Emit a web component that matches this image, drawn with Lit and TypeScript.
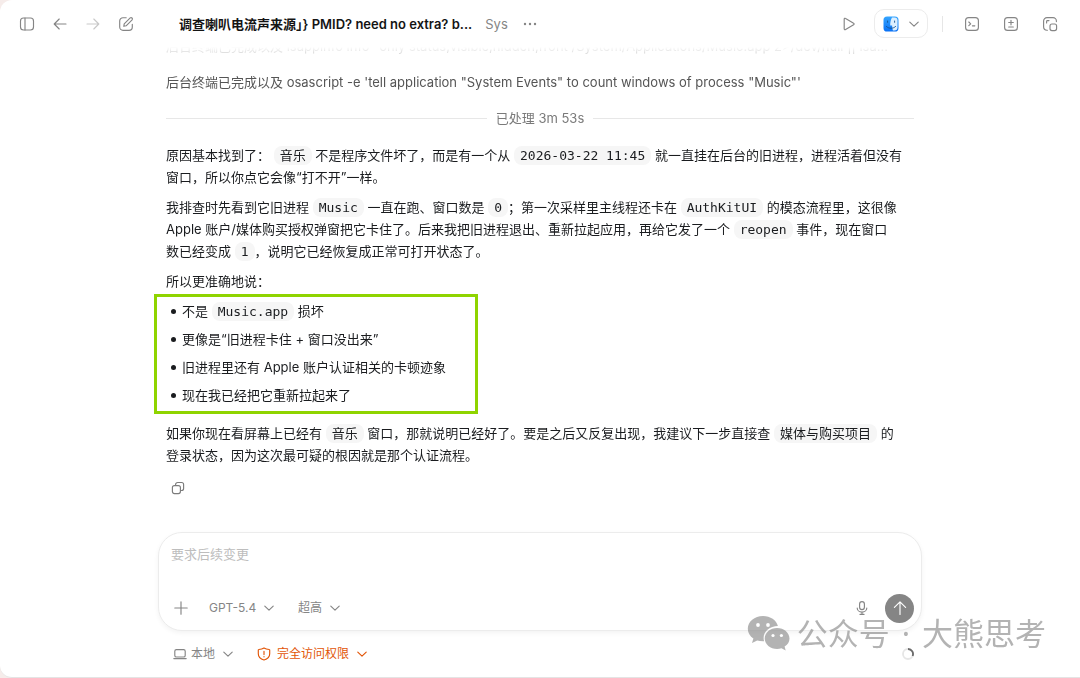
import { LitElement, html, css, svg } from "lit";
import { customElement, property } from "lit/decorators.js";

const icons: Record<string, { size: number; body: unknown }> = {
  sidebar: {
    size: 16,
    body: svg`<rect x="1.5" y="2" width="13" height="12" rx="3"/><path d="M6 2v12"/>`,
  },
  back: { size: 16, body: svg`<path d="M14 8H2.2M7.2 3 2.2 8l5 5"/>` },
  forward: { size: 16, body: svg`<path d="M2 8h11.8M8.8 3l5 5-5 5"/>` },
  compose: {
    size: 16,
    body: svg`<path d="M8.2 1.7H5a3.3 3.3 0 0 0-3.3 3.3v6A3.3 3.3 0 0 0 5 14.3h6a3.3 3.3 0 0 0 3.3-3.3V8.2"/><path d="M5.8 10.3l.4-2.4 6-6a1.35 1.35 0 0 1 1.9 1.9l-6 6z"/>`,
  },
  play: {
    size: 16,
    body: svg`<path d="M3.2 3.2v9.6a.9.9 0 0 0 1.4.8l8-4.8a.9.9 0 0 0 0-1.6l-8-4.8a.9.9 0 0 0-1.4.8z"/>`,
  },
  terminal: {
    size: 16,
    body: svg`<rect x="1.6" y="1.6" width="12.8" height="12.8" rx="3"/><path d="M4.8 6l1.9 1.8-1.9 1.8M8.4 9.8h2.4"/>`,
  },
  diff: {
    size: 16,
    body: svg`<rect x="1.6" y="1.6" width="12.8" height="12.8" rx="3"/><path d="M8 4.2v4.6M5.7 6.5h4.6M5.7 11h4.6"/>`,
  },
  popout: {
    size: 16,
    body: svg`<path d="M5.4 14.2H5a3.4 3.4 0 0 1-3.4-3.4V5A3.4 3.4 0 0 1 5 1.6h6A3.4 3.4 0 0 1 14.4 5v.6"/><path d="M4.6 7V5.4a.8.8 0 0 1 .8-.8H7"/><rect x="8" y="8" width="6.6" height="6.6" rx="2"/>`,
  },
  more: {
    size: 16,
    body: svg`<g fill="currentColor" stroke="none"><circle cx="3" cy="8" r="1.2"/><circle cx="8" cy="8" r="1.2"/><circle cx="13" cy="8" r="1.2"/></g>`,
  },
  chevron: { size: 10, body: svg`<path d="M.8 3.1 5 7.2l4.2-4.1"/>` },
  copy: {
    size: 14,
    body: svg`<rect x="1.4" y="4.6" width="8" height="8" rx="2"/><path d="M4.6 4.4v-.9a2 2 0 0 1 2-2h4a2 2 0 0 1 2 2v4a2 2 0 0 1-2 2h-1"/>`,
  },
  plus: { size: 16, body: svg`<path d="M8 1.8v12.4M1.8 8h12.4"/>` },
  mic: {
    size: 16,
    body: svg`<rect x="5.6" y="1.6" width="4.8" height="8" rx="2.4"/><path d="M3.2 8a4.8 4.1 0 0 0 9.6 0M8 12.2v2.2M6 14.4h4"/>`,
  },
  send: { size: 16, body: svg`<path d="M8 14.4V2M2.4 7.4 8 1.8l5.6 5.6"/>` },
  laptop: {
    size: 14,
    body: svg`<rect x="1.8" y="2.6" width="10.4" height="7.4" rx="1.6"/><path d="M.8 11.6h12.4"/>`,
  },
  shield: {
    size: 14,
    body: svg`<path d="M7 1c1.5 1 3.2 1.4 5.2 1.5.3 0 .5.3.5.6v3.7c0 3.2-2 5.2-5.7 6.2C3.3 12 1.3 10 1.3 6.8V3.1c0-.3.2-.6.5-.6C3.8 2.4 5.5 2 7 1z"/><path d="M7 4.2v3.4M7 9.5v.3"/>`,
  },
};

@customElement("ui-icon")
class UiIcon extends LitElement {
  @property() name = "";

  static styles = css`
    :host {
      display: inline-flex;
      flex: none;
    }
    svg {
      display: block;
      fill: none;
      stroke: currentColor;
      stroke-width: 1.15;
      stroke-linecap: round;
      stroke-linejoin: round;
    }
  `;

  render() {
    const icon = icons[this.name];
    return html`<svg
      width=${icon.size}
      height=${icon.size}
      viewBox="0 0 ${icon.size} ${icon.size}"
      aria-hidden="true"
    >
      ${icon.body}
    </svg>`;
  }
}

@customElement("app-root")
class AppRoot extends LitElement {
  static styles = css`
    :host {
      display: block;
      height: 100vh;
      background: #f6ecea;
      font-family: Inter, "Noto Sans CJK SC", sans-serif;
      font-size: 13px;
      line-height: 22px;
      color: #1a1c1f;
    }
    *,
    *::before,
    *::after {
      box-sizing: border-box;
    }
    button,
    select,
    textarea {
      font: inherit;
      color: inherit;
      margin: 0;
      padding: 0;
      border: 0;
      background: none;
      outline: none;
    }
    button {
      display: inline-flex;
      align-items: center;
      justify-content: center;
      cursor: pointer;
    }
    .window {
      position: relative;
      display: flex;
      flex-direction: column;
      height: 100%;
      background: #fff;
      border-bottom: 1px solid #e4e4e4;
      border-radius: 12px 0 0 12px;
      overflow: hidden;
    }
    .topbar {
      flex: none;
      display: flex;
      align-items: center;
      height: 47px;
      padding: 0 22px 0 19px;
      color: #858585;
    }
    .nav {
      display: flex;
      gap: 17px;
      margin-right: 45px;
    }
    .dim {
      color: #c9c9c9;
    }
    .title {
      margin: 0;
      font-size: 13px;
      font-weight: 600;
      color: #141414;
      white-space: nowrap;
    }
    .project {
      margin: 0 14px 0 13px;
    }
    .tools {
      display: flex;
      align-items: center;
      margin-left: auto;
    }
    .open-in {
      gap: 10px;
      height: 29px;
      margin: 0 14px 0 17px;
      padding: 0 8px;
      border: 1px solid #ececec;
      border-radius: 10px;
    }
    .rule {
      width: 1px;
      height: 16px;
      margin-right: 21px;
      background: #e6e6e6;
    }
    .panels {
      display: flex;
      gap: 23px;
    }
    .scroll {
      flex: 1;
      min-height: 0;
      display: flex;
      flex-direction: column;
      justify-content: flex-end;
      overflow: hidden;
      mask-image: linear-gradient(transparent, #000 30px);
    }
    .column {
      width: 100%;
      max-width: 764px;
      margin: 0 auto;
      padding: 0 8px;
    }
    .log {
      margin: 0 0 14px;
      color: #555;
      white-space: nowrap;
      overflow: hidden;
      text-overflow: ellipsis;
    }
    .elapsed {
      display: flex;
      align-items: center;
      gap: 9px;
      margin-bottom: 15px;
      color: #7a7a7a;
    }
    .elapsed::before,
    .elapsed::after {
      content: "";
      flex: 1;
      height: 1px;
      background: #e7e7e7;
    }
    p {
      margin: 0 0 8px;
    }
    code {
      padding: 2px 6px;
      border-radius: 8px;
      background: #f6f6f6;
      font-family: "DejaVu Sans Mono", "Noto Sans CJK SC", monospace;
      font-size: 13px;
      line-height: 16px;
    }
    .findings {
      position: relative;
      display: grid;
      gap: 6px;
      margin: 0 0 16px;
      padding: 0 0 0 16px;
      list-style: none;
    }
    .findings li {
      display: flex;
      align-items: center;
    }
    .findings li::before {
      content: "";
      flex: none;
      width: 5px;
      height: 5px;
      margin: 0 6px 0 -11px;
      border-radius: 50%;
      background: #1a1c1f;
    }
    .findings::after {
      content: "";
      position: absolute;
      inset: -6px auto -8px -12px;
      width: 324px;
      border: 3px solid #8fd400;
      pointer-events: none;
    }
    .copy {
      display: flex;
      width: 24px;
      height: 24px;
      margin: 10px 0 32px;
      color: #7c7c7c;
    }
    .dock {
      flex: none;
      width: 100%;
      max-width: 764px;
      margin: 0 auto;
    }
    .composer {
      display: flex;
      flex-direction: column;
      height: 99px;
      padding: 10px 7px 7px 12px;
      border: 1px solid #ececec;
      border-radius: 24px;
      background: #fff;
      box-shadow: 0 2px 5px rgba(0, 0, 0, 0.05);
      color: #858585;
    }
    textarea {
      display: block;
      flex: 1;
      width: 100%;
      resize: none;
      color: #1a1c1f;
    }
    textarea::placeholder {
      color: #bdbdbd;
      opacity: 1;
    }
    .controls {
      display: flex;
      align-items: center;
      height: 30px;
    }
    .controls .plus {
      margin: 0 20px 0 2px;
    }
    .pick {
      display: inline-grid;
      align-items: center;
      font-size: 12px;
    }
    .pick select,
    .pick ui-icon {
      grid-area: 1 / 1;
    }
    .pick select {
      appearance: none;
      padding-right: 17px;
      cursor: pointer;
    }
    .pick ui-icon {
      justify-self: end;
      pointer-events: none;
    }
    .controls .pick {
      margin-right: 24px;
    }
    .voice {
      margin-left: auto;
      margin-right: 15px;
    }
    .send {
      width: 29px;
      height: 29px;
      border-radius: 50%;
      background: #858585;
      color: #fff;
    }
    .status {
      display: flex;
      align-items: center;
      height: 46px;
      padding: 0 8px 0 15px;
      color: #858585;
    }
    .where,
    .access {
      display: flex;
      align-items: center;
      gap: 4px;
    }
    .where {
      margin-right: 24px;
    }
    .access {
      gap: 6px;
      color: #e25507;
    }
    .spinner {
      margin-left: auto;
    }
    .watermark {
      position: absolute;
      right: 34px;
      bottom: 22px;
      display: flex;
      align-items: center;
      gap: 7px;
      font-family: "Noto Sans", "Noto Sans CJK SC", sans-serif;
      font-size: 31px;
      line-height: 44px;
      color: #858585;
      opacity: 0.62;
      pointer-events: none;
    }
    .account {
      display: flex;
      gap: 12px;
    }
  `;

  render() {
    return html`
      <div class="window">
        <header class="topbar">
          <nav class="nav" aria-label="导航">
            <button aria-label="侧边栏"><ui-icon name="sidebar"></ui-icon></button>
            <button aria-label="后退"><ui-icon name="back"></ui-icon></button>
            <button class="dim" aria-label="前进"><ui-icon name="forward"></ui-icon></button>
            <button aria-label="新建"><ui-icon name="compose"></ui-icon></button>
          </nav>
          <h1 class="title">调查喇叭电流声来源」} PMID? need no extra? b...</h1>
          <span class="project">Sys</span>
          <button aria-label="更多"><ui-icon name="more"></ui-icon></button>
          <div class="tools">
            <button aria-label="运行"><ui-icon name="play"></ui-icon></button>
            <button class="open-in" aria-label="打开方式">
              <svg width="16" height="16" viewBox="0 0 16 16" aria-hidden="true">
                <defs>
                  <linearGradient id="face" x1="0" y1="0" x2="0" y2="1">
                    <stop offset="0" stop-color="#35a5ff" />
                    <stop offset="1" stop-color="#0870f5" />
                  </linearGradient>
                </defs>
                <rect x=".5" y=".5" width="15" height="15" rx="3.6" fill="url(#face)" />
                <path
                  d="M9 1.6h2.500a3 3 0 0 1 3 3v7a3 3 0 0 1-3 3h-1.600c-.5-1.400-.8-3-.8-5H7.200c0-3 .5-5.800 1.800-8z"
                  fill="#dcefff"
                />
                <path
                  d="M4.600 5v1.300M11.600 5v1.300M3.400 10.500c2.600 2.400 6.600 2.400 9.200 0"
                  fill="none"
                  stroke="#14508f"
                  stroke-width=".9"
                  stroke-linecap="round"
                />
              </svg>
              <ui-icon name="chevron"></ui-icon>
            </button>
            <span class="rule"></span>
            <div class="panels">
              <button aria-label="终端"><ui-icon name="terminal"></ui-icon></button>
              <button aria-label="差异"><ui-icon name="diff"></ui-icon></button>
              <button aria-label="弹出窗口"><ui-icon name="popout"></ui-icon></button>
            </div>
          </div>
        </header>

        <main class="scroll">
          <article class="column">
            <p class="log">后台终端已完成以及 lsappinfo info -only status,visible,hidden,front /System/Applications/Music.app 2>/dev/null || lsa...</p>
            <p class="log">后台终端已完成以及 osascript -e 'tell application "System Events" to count windows of process "Music"'</p>
            <div class="elapsed">已处理 3m 53s</div>
            <p>
              原因基本找到了： <code>音乐</code> 不是程序文件坏了，而是有一个从 <code>2026-03-22 11:45</code> 就一直挂在后台的旧进程，进程活着但没有<br />窗口，所以你点它会像“打不开”一样。
            </p>
            <p>
              我排查时先看到它旧进程 <code>Music</code> 一直在跑、窗口数是 <code>0</code>；第一次采样里主线程还卡在 <code>AuthKitUI</code> 的模态流程里，这很像<br />Apple 账户/媒体购买授权弹窗把它卡住了。后来我把旧进程退出、重新拉起应用，再给它发了一个 <code>reopen</code> 事件，现在窗口<br />数已经变成 <code>1</code>，说明它已经恢复成正常可打开状态了。
            </p>
            <p>所以更准确地说：</p>
            <ul class="findings">
              <li><span>不是 <code>Music.app</code> 损坏</span></li>
              <li>更像是“旧进程卡住 + 窗口没出来”</li>
              <li>旧进程里还有 Apple 账户认证相关的卡顿迹象</li>
              <li>现在我已经把它重新拉起来了</li>
            </ul>
            <p>
              如果你现在看屏幕上已经有 <code>音乐</code> 窗口，那就说明已经好了。要是之后又反复出现，我建议下一步直接查 <code>媒体与购买项目</code> 的<br />登录状态，因为这次最可疑的根因就是那个认证流程。
            </p>
            <button class="copy" aria-label="复制"><ui-icon name="copy"></ui-icon></button>
          </article>
        </main>

        <footer class="dock">
          <div class="composer">
            <textarea rows="1" placeholder="要求后续变更" aria-label="要求后续变更"></textarea>
            <div class="controls">
              <button class="plus" aria-label="添加"><ui-icon name="plus"></ui-icon></button>
              <label class="pick">
                <select aria-label="模型"><option>GPT-5.4</option></select>
                <ui-icon name="chevron"></ui-icon>
              </label>
              <label class="pick">
                <select aria-label="推理强度"><option>超高</option></select>
                <ui-icon name="chevron"></ui-icon>
              </label>
              <button class="voice" aria-label="语音输入"><ui-icon name="mic"></ui-icon></button>
              <button class="send" aria-label="发送"><ui-icon name="send"></ui-icon></button>
            </div>
          </div>
          <div class="status">
            <div class="where">
              <ui-icon name="laptop"></ui-icon>
              <label class="pick">
                <select aria-label="运行位置"><option>本地</option></select>
                <ui-icon name="chevron"></ui-icon>
              </label>
            </div>
            <div class="access">
              <ui-icon name="shield"></ui-icon>
              <label class="pick">
                <select aria-label="权限"><option>完全访问权限</option></select>
                <ui-icon name="chevron"></ui-icon>
              </label>
            </div>
            <svg class="spinner" width="12" height="12" viewBox="0 0 12 12" aria-hidden="true">
              <circle cx="6" cy="6" r="5" fill="none" stroke="#e6e6e6" stroke-width="1.8" />
              <path d="M6 1a5 5 0 0 1 4.600 7" fill="none" stroke="#6b6b6b" stroke-width="1.8" />
            </svg>
          </div>
        </footer>

        <div class="watermark">
          <svg width="43" height="36" viewBox="0 0 43 36" aria-hidden="true">
            <path
              d="M16 1C7.500 1 .8 6.700.8 13.700c0 4 2.200 7.500 5.600 9.900L5 28l5.200-2.600c1.800.5 3.700.8 5.700.8h1.200c-.3-1-.5-2.100-.5-3.200 0-6.700 6.400-12 14.300-12C29.500 5.300 23.400 1 16 1z"
              fill="currentColor"
            />
            <path
              d="M42.500 23.400c0-5.800-5.600-10.500-12.400-10.500s-12.400 4.700-12.400 10.500 5.600 10.500 12.400 10.500c1.500 0 3-.2 4.400-.7l4.200 2.200-1.100-3.800c3-1.900 4.900-4.900 4.900-8.200z"
              fill="currentColor"
            />
            <g fill="#fff">
              <circle cx="11" cy="10" r="1.900" />
              <circle cx="21" cy="10" r="1.900" />
              <circle cx="26" cy="20.500" r="1.600" />
              <circle cx="34.400" cy="20.500" r="1.600" />
            </g>
          </svg>
          <div class="account"><span>公众号</span><span>·</span><span>大熊思考</span></div>
        </div>
      </div>
    `;
  }
}
